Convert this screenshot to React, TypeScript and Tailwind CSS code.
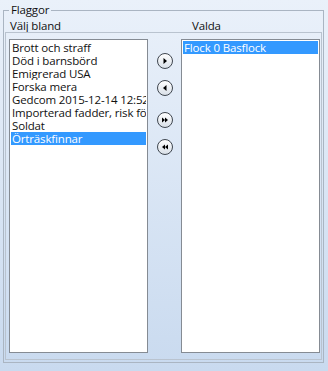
import React from "react";

const leftItems = [
  "Brott och straff",
  "Död i barnsbörd",
  "Emigrerad USA",
  "Forska mera",
  "Gedcom 2015-12-14 12:52:",
  "Importerad fadder, risk för dubbletter",
  "Soldat",
  "Örträskfinnar",
];

function RoundBtn({ kind }: { kind: "r" | "l" | "rr" | "ll" }) {
  return (
    <div className="w-[16px] h-[16px] rounded-full border border-[#3f464f] bg-gradient-to-b from-[#ffffff] to-[#d9e0e8] flex items-center justify-center">
      <svg width="10" height="10" viewBox="0 0 10 10">
        {kind === "r" && <polygon points="3.5,2 7,5 3.5,8" fill="#000" />}
        {kind === "l" && <polygon points="6.5,2 3,5 6.5,8" fill="#000" />}
        {kind === "rr" && (
          <g fill="#000">
            <polygon points="2,2.5 5,5 2,7.5" />
            <polygon points="5,2.5 8,5 5,7.5" />
          </g>
        )}
        {kind === "ll" && (
          <g fill="#000">
            <polygon points="5,2.5 2,5 5,7.5" />
            <polygon points="8,2.5 5,5 8,7.5" />
          </g>
        )}
      </svg>
    </div>
  );
}

export default function App() {
  return (
    <div
      className="w-[328px] h-[371px] bg-gradient-to-b from-[#eaf1fa] to-[#c9daef] pt-[3px] pl-[3px] pr-[4px] text-[11.5px] text-[#111] tracking-[-0.15px]"
      style={{ fontFamily: '"Open Sans", "Noto Sans", Arial, sans-serif' }}
    >
      <fieldset className="border border-[#aab5c2] m-0 p-0 h-[360px] flex flex-col">
        <legend className="ml-[5px] px-[2px] leading-[14px]">Flaggor</legend>
        <div className="flex h-[15px] leading-[13px] pt-[2px]">
          <div className="pl-[6px] w-[188px]">Välj bland</div>
          <div>Valda</div>
        </div>
        <div className="flex-1 border border-[#b9c3cf] ml-[1px] mr-[1px] mb-[2px] pt-[6px] pl-[3px] flex">
          <div className="w-[139px] h-[314px] border border-[#858b93] bg-white p-[1px] overflow-hidden">
            {leftItems.map((t, i) => (
              <div
                key={t}
                className={
                  "h-[13px] leading-[13px] pl-[1px] whitespace-nowrap overflow-hidden " +
                  (i === leftItems.length - 1 ? "bg-[#3399ff] text-white" : "")
                }
              >
                {t}
              </div>
            ))}
          </div>
          <div className="w-[33px] flex flex-col items-center pt-[14px]">
            <RoundBtn kind="r" />
            <div className="h-[11px]" />
            <RoundBtn kind="l" />
            <div className="h-[16px]" />
            <RoundBtn kind="rr" />
            <div className="h-[11px]" />
            <RoundBtn kind="ll" />
          </div>
          <div className="w-[139px] h-[314px] border border-[#858b93] bg-white p-[1px] overflow-hidden">
            <div className="h-[13px] leading-[13px] pl-[1px] bg-[#3399ff] text-white whitespace-nowrap">
              Flock 0 Basflock
            </div>
          </div>
        </div>
      </fieldset>
    </div>
  );
}
